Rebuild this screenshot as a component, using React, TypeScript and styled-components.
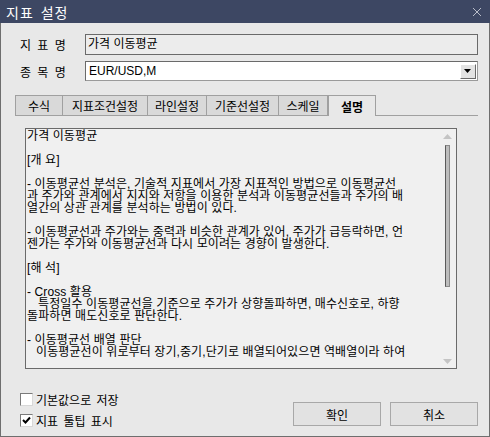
import React, { useState } from "react"
import styled, { createGlobalStyle } from "styled-components"

const GlobalStyle = createGlobalStyle`
  html, body {
    margin: 0;
    padding: 0;
    background: #e8e8e8;
  }
  body {
    font-family: "Liberation Sans", "Noto Sans CJK KR", sans-serif;
    font-size: 12px;
    color: #000;
  }
`

const Window = styled.div`
  width: 490px;
  height: 437px;
  box-sizing: border-box;
  display: flex;
  flex-direction: column;
  background: #e8e8e8;
  border: 1px solid #6e6e6e;
  border-top: 0;
`

const TitleBar = styled.div`
  height: 23px;
  flex: none;
  display: flex;
  align-items: center;
  justify-content: space-between;
  padding: 0 8px 0 6px;
  margin: 0 -1px;
  background: #3d4763;
  color: #fff;
  font-size: 14px;
`

const TitleText = styled.span`
  letter-spacing: 1px;
  word-spacing: 2px;
`

const Body = styled.div`
  flex: 1;
  display: flex;
  flex-direction: column;
  padding: 11px 11px 0 14px;
`

const FieldRow = styled.div`
  display: flex;
  align-items: center;
  margin-bottom: 6px;
`

const Label = styled.div`
  width: 65px;
  padding-left: 5px;
  word-spacing: 3px;
`

const ReadOnlyBox = styled.div`
  flex: 1;
  height: 21px;
  box-sizing: border-box;
  border: 1px solid #6a6a6a;
  background: #ececec;
  padding: 1px 0 0 2px;
  line-height: 16px;
`

const Combo = styled.div`
  flex: 1;
  height: 20px;
  box-sizing: border-box;
  display: flex;
  align-items: center;
  border: 1px solid #9a9a9a;
  border-top-color: #6a6a6a;
  border-left-color: #6a6a6a;
  background: #fff;
  padding: 0 1px 0 3px;
`

const ComboText = styled.span`
  flex: 1;
`

const DropButton = styled.div`
  width: 16px;
  height: 15px;
  box-sizing: border-box;
  display: flex;
  align-items: center;
  justify-content: center;
  background: #e3e3e3;
  border: 1px solid;
  border-color: #fff #6a6a6a #6a6a6a #fff;
`

const TabStrip = styled.div`
  display: flex;
  margin-top: 8px;
  height: 20px;
  border-bottom: 1px solid #a0a0a0;
`

const Tab = styled.div<{ active?: boolean; w: number }>`
  width: ${(p) => p.w}px;
  box-sizing: border-box;
  display: flex;
  align-items: center;
  justify-content: center;
  border: 1px solid #a0a0a0;
  border-left-width: ${(p) => (p.active ? 1 : 0)}px;
  border-bottom: 0;
  margin-bottom: ${(p) => (p.active ? -1 : 0)}px;
  background: ${(p) => (p.active ? "#e8e8e8" : "#d9d9d9")};
  font-weight: ${(p) => (p.active ? 700 : 400)};
  &:first-child {
    border-left-width: 1px;
  }
`

const TabPanel = styled.div`
  padding: 12px 0 0 10px;
  display: flex;
  flex-direction: column;
`

const TextBox = styled.div`
  width: 432px;
  height: 241px;
  box-sizing: border-box;
  display: flex;
  border: 1px solid #6a6a6a;
  background: #f0f0f0;
  overflow: hidden;
`

const TextContent = styled.div`
  flex: 1;
  padding: 1px 0 0 1px;
  overflow: hidden;
  letter-spacing: 0.1px;
`

const Para = styled.div`
  margin-bottom: 12px;
`

const Line = styled.div<{ indent?: number }>`
  white-space: pre;
  line-height: 12px;
  height: 12px;
  padding-left: ${(p) => p.indent || 0}px;
`

const ScrollBar = styled.div`
  width: 17px;
  flex: none;
  display: flex;
  flex-direction: column;
  align-items: center;
  padding: 5px 0 4px;
  box-sizing: border-box;
`

const ScrollTrack = styled.div`
  flex: 1;
  width: 100%;
  display: flex;
  justify-content: center;
  padding: 6px 0 0;
`

const Thumb = styled.div`
  width: 5px;
  height: 142px;
  box-sizing: border-box;
  background: #bdbdbd;
  border: 1px solid #8a8a8a;
  border-left-color: #5a5a5a;
`

const Footer = styled.div`
  display: flex;
  justify-content: space-between;
  margin-top: 24px;
`

const Checks = styled.div`
  display: flex;
  flex-direction: column;
  gap: 8px;
  padding-left: 5px;
`

const CheckRow = styled.label`
  display: flex;
  align-items: center;
  gap: 3px;
  height: 13px;
  word-spacing: 2px;
`

const CheckBox = styled.span<{ checked?: boolean }>`
  width: 13px;
  height: 13px;
  box-sizing: border-box;
  display: flex;
  align-items: center;
  justify-content: center;
  background: #fff;
  border: 1px solid;
  border-color: #7a7a7a #d8d8d8 #d8d8d8 #7a7a7a;
`

const Buttons = styled.div`
  display: flex;
  gap: 9px;
  padding-top: 9px;
`

const Button = styled.button`
  width: 88px;
  height: 24px;
  box-sizing: border-box;
  font: inherit;
  color: #000;
  background: #e2e2e2;
  border: 1px solid #a8a8a8;
  padding: 0;
`

const tabs = [
  { label: "수식", w: 48 },
  { label: "지표조건설정", w: 85 },
  { label: "라인설정", w: 59 },
  { label: "기준선설정", w: 72 },
  { label: "스케일", w: 49 },
  { label: "설명", w: 48 },
]

const paragraphs: { text: string; indent?: number }[][] = [
  [{ text: "가격 이동평균" }],
  [{ text: "[개 요]" }],
  [
    { text: "- 이동평균선 분석은, 기술적 지표에서 가장 지표적인 방법으로 이동평균선" },
    { text: "과 주가와 관계에서 지지와 저항을 이용한 분석과 이동평균선들과 주가의 배" },
    { text: "열간의 상관 관계를 분석하는 방법이 있다." },
  ],
  [
    { text: "- 이동평균선과 주가와는 중력과 비슷한 관계가 있어, 주가가 급등락하면, 언" },
    { text: "젠가는 주가와 이동평균선과 다시 모이려는 경향이 발생한다." },
  ],
  [{ text: "[해 석]" }],
  [
    { text: "- Cross 활용" },
    { text: "특정일수 이동평균선을 기준으로 주가가 상향돌파하면, 매수신호로, 하향", indent: 11 },
    { text: "돌파하면 매도신호로 판단한다." },
  ],
  [
    { text: "- 이동평균선 배열 판단" },
    { text: "이동평균선이 위로부터 장기,중기,단기로 배열되어있으면 역배열이라 하여", indent: 9 },
  ],
]

const Check = () => (
  <svg width="9" height="9" viewBox="0 0 9 9">
    <path d="M1 4 L3.5 6.5 L8 1.5" stroke="#000" strokeWidth="2" fill="none" />
  </svg>
)

const App = () => {
  const [active, setActive] = useState(5)
  const [saveDefault, setSaveDefault] = useState(false)
  const [tooltip, setTooltip] = useState(true)

  return (
    <>
      <GlobalStyle />
      <Window>
        <TitleBar>
          <TitleText>지표 설정</TitleText>
          <svg width="10" height="10" viewBox="0 0 10 10">
            <path d="M1 1 L9 9 M9 1 L1 9" stroke="#b8bcc8" strokeWidth="1" />
          </svg>
        </TitleBar>
        <Body>
          <FieldRow>
            <Label>지 표 명</Label>
            <ReadOnlyBox>가격 이동평균</ReadOnlyBox>
          </FieldRow>
          <FieldRow>
            <Label>종 목 명</Label>
            <Combo>
              <ComboText>EUR/USD,M</ComboText>
              <DropButton>
                <svg width="8" height="4" viewBox="0 0 8 4">
                  <path d="M0 0 H7 L3.5 4 Z" fill="#000" />
                </svg>
              </DropButton>
            </Combo>
          </FieldRow>
          <TabStrip>
            {tabs.map((t, i) => (
              <Tab key={t.label} w={t.w} active={i === active} onClick={() => setActive(i)}>
                {t.label}
              </Tab>
            ))}
          </TabStrip>
          <TabPanel>
            <TextBox>
              <TextContent>
                {paragraphs.map((p, i) => (
                  <Para key={i}>
                    {p.map((l, j) => (
                      <Line key={j} indent={l.indent}>
                        {l.text}
                      </Line>
                    ))}
                  </Para>
                ))}
              </TextContent>
              <ScrollBar>
                <svg width="9" height="5" viewBox="0 0 9 5">
                  <path d="M0 5 L4.5 0 L9 5 Z" fill="#c4c4c4" />
                </svg>
                <ScrollTrack>
                  <Thumb />
                </ScrollTrack>
                <svg width="9" height="5" viewBox="0 0 9 5">
                  <path d="M0 0 L9 0 L4.5 5 Z" fill="#c4c4c4" />
                </svg>
              </ScrollBar>
            </TextBox>
          </TabPanel>
          <Footer>
            <Checks>
              <CheckRow onClick={() => setSaveDefault(!saveDefault)}>
                <CheckBox checked={saveDefault}>{saveDefault && <Check />}</CheckBox>
                기본값으로 저장
              </CheckRow>
              <CheckRow onClick={() => setTooltip(!tooltip)}>
                <CheckBox checked={tooltip}>{tooltip && <Check />}</CheckBox>
                지표 툴팁 표시
              </CheckRow>
            </Checks>
            <Buttons>
              <Button>확인</Button>
              <Button>취소</Button>
            </Buttons>
          </Footer>
        </Body>
      </Window>
    </>
  )
}

export default App
